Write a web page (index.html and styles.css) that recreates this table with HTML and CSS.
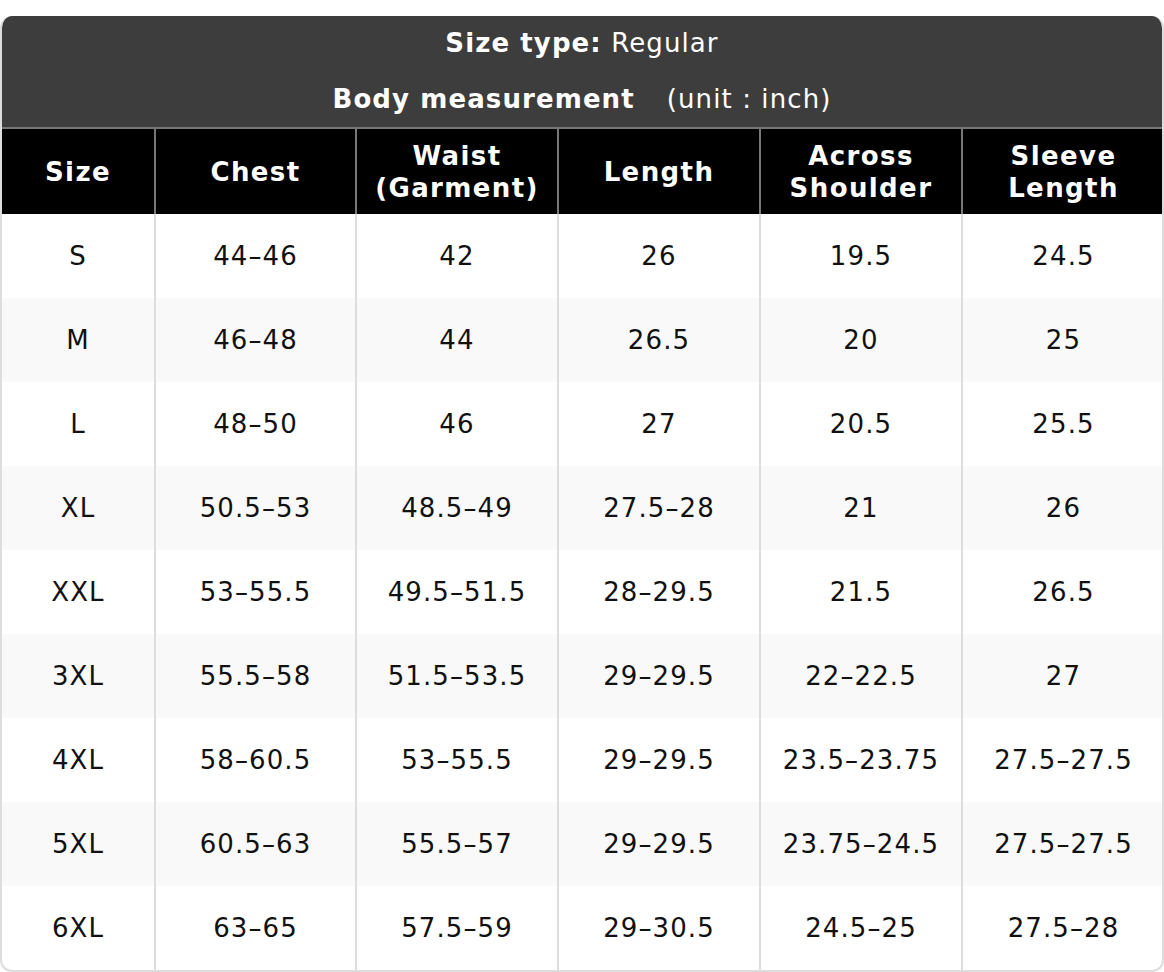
FILE: index.html
```html
<!DOCTYPE html>
<html>
<head>
<meta charset="utf-8">
<link rel="stylesheet" href="styles.css">
</head>
<body>
<div class="chart">
  <div class="caption">
    <div class="cap-line"><b>Size type:</b> Regular</div>
    <div class="cap-line"><b>Body measurement</b><span class="unit">(unit : inch)</span></div>
  </div>
  <table class="sizes">
    <colgroup>
      <col class="c1"><col class="c2"><col class="c3"><col class="c4"><col class="c5"><col class="c6">
    </colgroup>
    <thead>
      <tr><th>Size</th><th>Chest</th><th>Waist<br>(Garment)</th><th>Length</th><th>Across<br>Shoulder</th><th>Sleeve<br>Length</th></tr>
    </thead>
    <tbody>
      <tr><td>S</td><td>44–46</td><td>42</td><td>26</td><td>19.5</td><td>24.5</td></tr>
      <tr><td>M</td><td>46–48</td><td>44</td><td>26.5</td><td>20</td><td>25</td></tr>
      <tr><td>L</td><td>48–50</td><td>46</td><td>27</td><td>20.5</td><td>25.5</td></tr>
      <tr><td>XL</td><td>50.5–53</td><td>48.5–49</td><td>27.5–28</td><td>21</td><td>26</td></tr>
      <tr><td>XXL</td><td>53–55.5</td><td>49.5–51.5</td><td>28–29.5</td><td>21.5</td><td>26.5</td></tr>
      <tr><td>3XL</td><td>55.5–58</td><td>51.5–53.5</td><td>29–29.5</td><td>22–22.5</td><td>27</td></tr>
      <tr><td>4XL</td><td>58–60.5</td><td>53–55.5</td><td>29–29.5</td><td>23.5–23.75</td><td>27.5–27.5</td></tr>
      <tr><td>5XL</td><td>60.5–63</td><td>55.5–57</td><td>29–29.5</td><td>23.75–24.5</td><td>27.5–27.5</td></tr>
      <tr><td>6XL</td><td>63–65</td><td>57.5–59</td><td>29–30.5</td><td>24.5–25</td><td>27.5–28</td></tr>
    </tbody>
  </table>
</div>
</body>
</html>
```

FILE: styles.css
```css
html, body {
  margin: 0;
  padding: 0;
  background: #fff;
}
body {
  padding-top: 16px;
  font-family: "DejaVu Sans", "Liberation Sans", sans-serif;
  font-size: 26px;
  letter-spacing: 1.1px;
  color: #111;
}
.chart {
  width: 1164px;
  box-sizing: border-box;
  border: 2px solid #ddd;
  border-top: none;
  border-radius: 12px;
  overflow: hidden;
}
.caption {
  background: #3d3d3d;
  color: #fff;
  text-align: center;
}
.cap-line {
  height: 56px;
  line-height: 56px;
}
.cap-line:first-child {
  height: 55px;
  line-height: 55px;
}
.unit {
  margin-left: 32px;
}
.sizes {
  width: 1164px;
  margin-left: -2px;
  border-collapse: collapse;
  table-layout: fixed;
}
.c1 { width: 154px; }
.c2 { width: 201px; }
.c3 { width: 202px; }
.c4 { width: 202px; }
.c5 { width: 202px; }
.c6 { width: 203px; }
.sizes th {
  background: #000;
  color: #fff;
  font-weight: bold;
  letter-spacing: 1.4px;
  height: 85px;
  line-height: 32px;
  padding: 0;
  border: 2px solid #777;
  border-bottom: none;
  text-align: center;
  vertical-align: middle;
}
.sizes td {
  height: 84px;
  padding: 0;
  border: 2px solid #ddd;
  border-top: none;
  border-bottom: none;
  text-align: center;
  vertical-align: middle;
}
.sizes tbody tr:nth-child(even) td {
  background: #f9f9f9;
}
```
